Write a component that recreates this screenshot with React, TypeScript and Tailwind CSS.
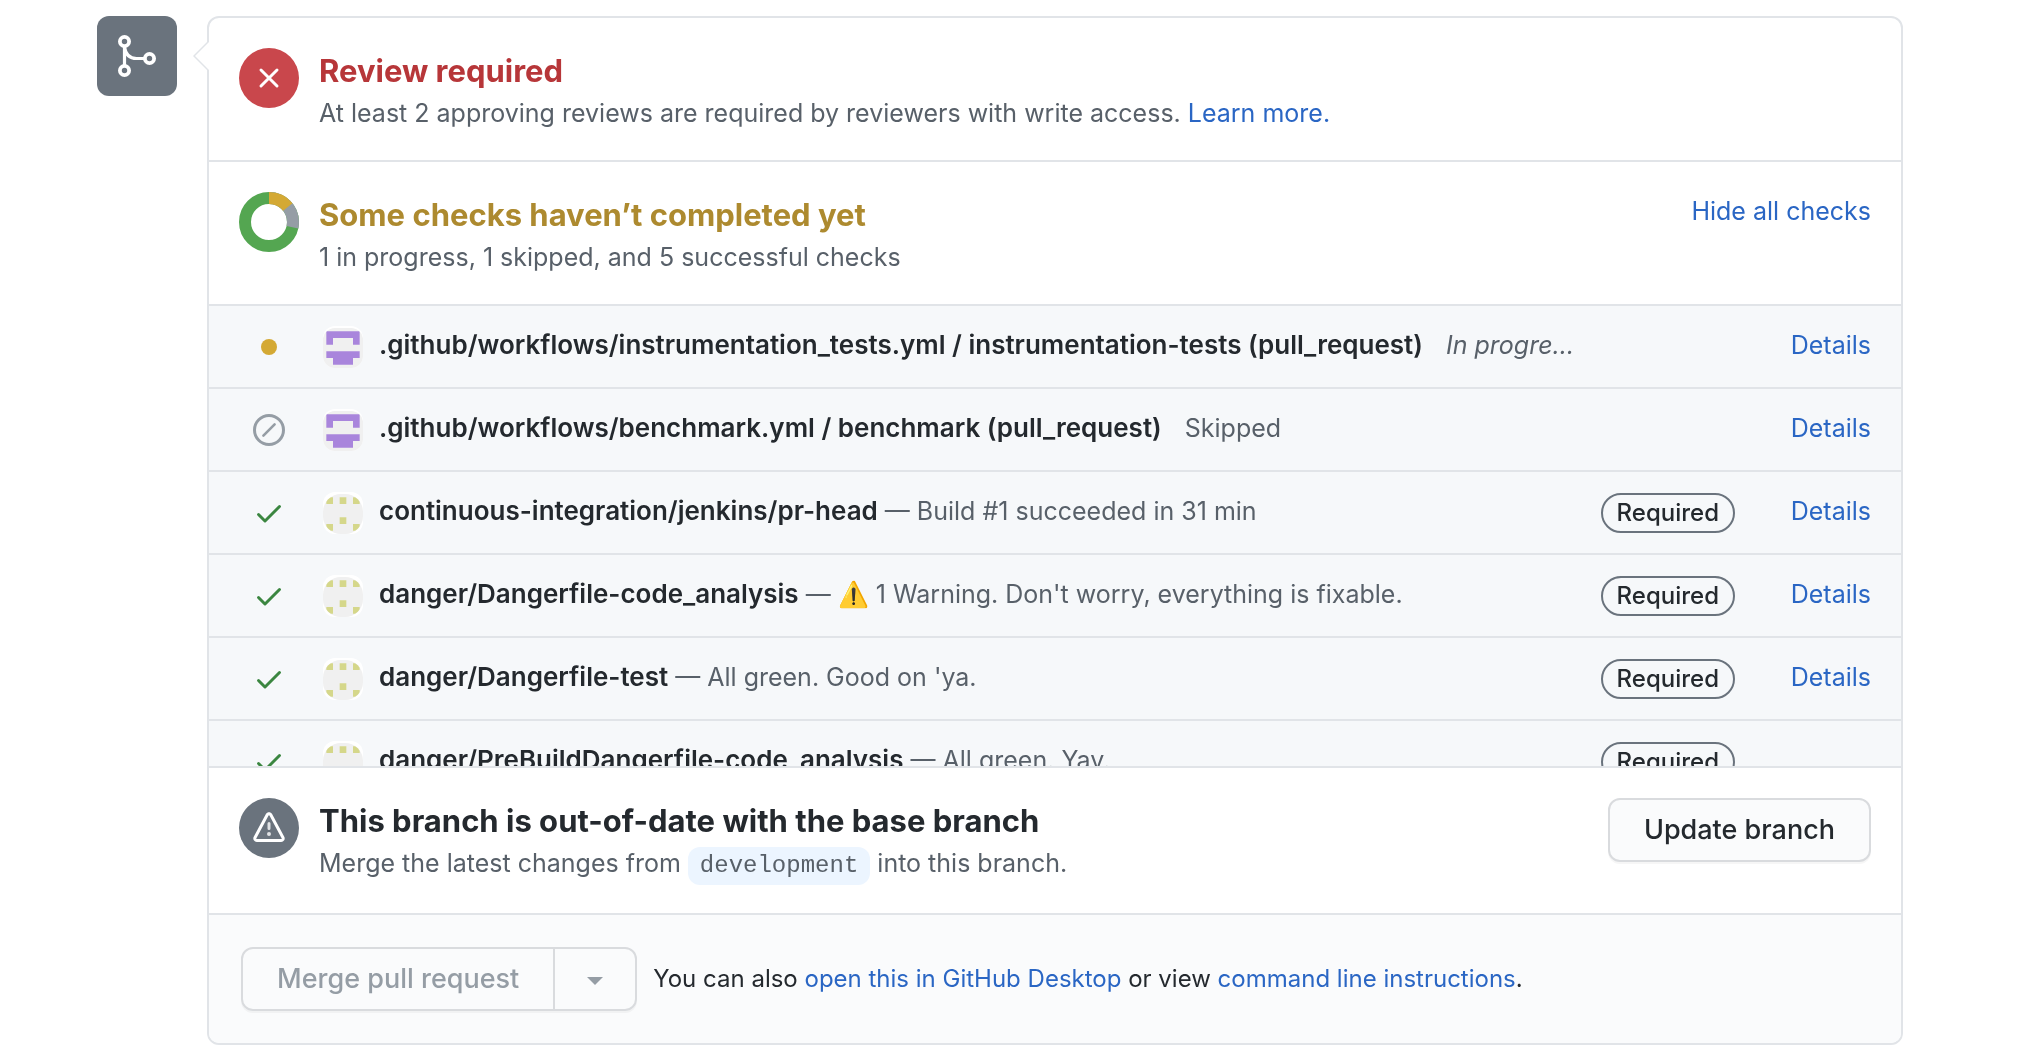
import type { ReactNode } from "react";

type Status = "pending" | "skipped" | "success";
type Check = {
  status: Status;
  name: string;
  note: string;
  required?: boolean;
  details?: boolean;
};

const checks: Check[] = [
  { status: "pending", name: ".github/workflows/instrumentation_tests.yml / instrumentation-tests (pull_request)", note: "In progre…", details: true },
  { status: "skipped", name: ".github/workflows/benchmark.yml / benchmark (pull_request)", note: "Skipped", details: true },
  { status: "success", name: "continuous-integration/jenkins/pr-head", note: "— Build #1 succeeded in 31 min", required: true, details: true },
  { status: "success", name: "danger/Dangerfile-code_analysis", note: "— ⚠️ 1 Warning. Don't worry, everything is fixable.", required: true, details: true },
  { status: "success", name: "danger/Dangerfile-test", note: "— All green. Good on 'ya.", required: true, details: true },
  { status: "success", name: "danger/PreBuildDangerfile-code_analysis", note: "— All green. Yay.", required: true },
];

function MergeIcon() {
  return (
    <svg viewBox="0 0 48 48" className="size-12" fill="none" stroke="#fff" strokeWidth="3.8" aria-hidden="true">
      <circle cx="11.5" cy="9.5" r="4.6" />
      <circle cx="11.5" cy="38.5" r="4.6" />
      <circle cx="36.5" cy="26.5" r="4.6" />
      <path strokeWidth="3.2" d="M11.5 14v20M11.5 15c1 7 5 11.5 12 11.5h8.5" />
    </svg>
  );
}

function CheckStatus({ status }: { status: Status }) {
  if (status === "pending") {
    return (
      <svg viewBox="0 0 16 16" className="size-8" role="img" aria-label="In progress">
        <circle cx="8" cy="8" r="4" fill="#d4a934" />
      </svg>
    );
  }
  if (status === "skipped") {
    return (
      <svg viewBox="0 0 16 16" className="size-8" fill="none" stroke="#959da5" strokeWidth="1.5" role="img" aria-label="Skipped">
        <circle cx="8" cy="8" r="7.25" />
        <path d="M5.2 10.8l5.6-5.6" strokeWidth="1.3" strokeLinecap="round" />
      </svg>
    );
  }
  return (
    <svg viewBox="0 0 16 16" className="size-8" fill="#3b8640" role="img" aria-label="Successful">
      <path d="M13.78 4.22a.75.75 0 010 1.06l-7.25 7.25a.75.75 0 01-1.06 0L2.22 9.28a.75.75 0 011.06-1.06L6 10.94l6.72-6.72a.75.75 0 011.06 0z" />
    </svg>
  );
}

function Avatar({ workflow }: { workflow: boolean }) {
  return (
    <span className="mt-0.5 mr-4 ml-6 block size-10 shrink-0 rounded-xl bg-white shadow-[0_-2px_0_#fff]">
      {workflow ? (
        <svg viewBox="0 0 12 12" className="size-10 rounded-xl bg-[#f0f0f0]" aria-hidden="true">
          <path fill="#a985dc" d="M1 1h10v4H9V3H3v2H1zM1 7h10v2H9v2H3V9H1z" />
        </svg>
      ) : (
        <svg viewBox="0 0 12 12" className="size-10 rounded-[18px] bg-[#f0f0f0]" aria-hidden="true">
          <path fill="#d5d78a" d="M1 1h2v2H1zM5 1h2v2H5zM9 1h2v2H9zM5 7h2v2H5zM1 9h2v2H1zM9 9h2v2H9z" />
        </svg>
      )}
    </span>
  );
}

function Donut() {
  return (
    <svg viewBox="0 0 60 60" className="size-[60px]" fill="none" strokeWidth="12" role="img" aria-label="5 of 7 checks successful">
      <g transform="rotate(-90 30 30)">
        <circle cx="30" cy="30" r="24" stroke="#54a651" />
        <circle cx="30" cy="30" r="24" stroke="#959da5" pathLength="7" strokeDasharray="2 5" />
        <circle cx="30" cy="30" r="24" stroke="#d4a934" pathLength="7" strokeDasharray="1 6" />
      </g>
    </svg>
  );
}

function Section({ icon, title, titleColor, action, children }: { icon: ReactNode; title: string; titleColor: string; action?: ReactNode; children: ReactNode }) {
  return (
    <section className="flex items-start gap-5 border-b-2 border-[#e1e4e8] px-[30px] pt-[30px] pb-7">
      <div className="size-[60px] shrink-0">{icon}</div>
      <div className="min-w-0 flex-1">
        <h3 className={`text-[31px] leading-[46px] font-bold ${titleColor}`}>{title}</h3>
        <p className="text-[25px] leading-[38px] text-[#586069]">{children}</p>
      </div>
      {action}
    </section>
  );
}

function CheckRow({ check }: { check: Check }) {
  const spaced = check.status !== "success";
  const italic = check.status === "pending";
  return (
    <li className="flex h-[83px] items-center border-b-2 border-[#e1e4e8] px-[30px]">
      <span className="flex w-[60px] shrink-0 justify-center">
        <CheckStatus status={check.status} />
      </span>
      <Avatar workflow={spaced} />
      <p className="min-w-0 flex-1 truncate pb-1 text-[25px] leading-[38px] text-[#586069]">
        <strong className="text-[26px] font-semibold text-[#24292e]">{check.name}</strong>{" "}
        <span className={`${spaced ? "ml-4" : ""} ${italic ? "italic" : ""}`}>{check.note}</span>
      </p>
      {check.required && (
        <span className="h-10 rounded-full border-2 border-[#6a737d] px-3.5 text-2xl leading-9 font-medium text-[#24292e]">
          Required
        </span>
      )}
      <span className="w-[136px] shrink-0 pb-1 text-right text-[25px] leading-[38px]">
        {check.details && <a href="#details" className="text-[#2a66c4]">Details</a>}
      </span>
    </li>
  );
}

export default function App() {
  return (
    <main className="flex min-h-screen items-start gap-[30px] bg-white pt-4 pr-[138px] pl-[97px] font-['Inter',sans-serif] text-[#24292e]">
      <div className="flex size-20 shrink-0 items-center justify-center rounded-xl bg-[#6a737d]">
        <MergeIcon />
      </div>
      <div className="relative min-w-0 flex-1 rounded-xl border-2 border-[#e1e4e8]">
        <svg viewBox="0 0 16 32" className="absolute top-[22px] -left-4 h-8 w-4" aria-hidden="true">
          <path d="M16 1L1 16l15 15" fill="#fff" stroke="#e1e4e8" strokeWidth="1.5" />
        </svg>
        <Section
          title="Review required"
          titleColor="text-[#b73639]"
          icon={
            <div className="flex size-[60px] items-center justify-center rounded-full bg-[#c9474c]">
              <svg viewBox="0 0 16 16" className="size-8" fill="none" stroke="#fff" strokeWidth="1.5" strokeLinecap="round" aria-hidden="true">
                <path d="M4 4l8 8M12 4l-8 8" />
              </svg>
            </div>
          }
        >
          At least 2 approving reviews are required by reviewers with write access.{" "}
          <a href="#learn" className="text-[#2a66c4]">Learn more.</a>
        </Section>
        <Section
          title="Some checks haven’t completed yet"
          titleColor="text-[#ad8a2f]"
          icon={<Donut />}
          action={<button type="button" className="text-[25px] leading-[38px] text-[#2a66c4]">Hide all checks</button>}
        >
          1 in progress, 1 skipped, and 5 successful checks
        </Section>
        <ul className="h-[460px] overflow-y-auto bg-[#f6f8fa] [scrollbar-width:none]">
          {checks.map((check) => (
            <CheckRow key={check.name} check={check} />
          ))}
        </ul>
        <div className="border-t-2 border-[#e1e4e8]">
          <Section
            title="This branch is out-of-date with the base branch"
            titleColor="text-[#24292e]"
            icon={
              <div className="flex size-[60px] items-center justify-center rounded-full bg-[#6a737d]">
                <svg viewBox="0 0 16 16" className="size-8" fill="#fff" aria-hidden="true">
                  <path d="M8.22 1.754a.25.25 0 00-.44 0L1.698 13.132a.25.25 0 00.22.368h12.164a.25.25 0 00.22-.368L8.22 1.754zm-1.763-.707c.659-1.234 2.427-1.234 3.086 0l6.082 11.378A1.75 1.75 0 0114.082 15H1.918a1.75 1.75 0 01-1.543-2.575L6.457 1.047z" />
                  <path opacity="0.8" d="M9 11a1 1 0 11-2 0 1 1 0 012 0zm-.25-5.25a.75.75 0 00-1.5 0v2.5a.75.75 0 001.5 0v-2.5z" />
                </svg>
              </div>
            }
            action={
              <button type="button" className="h-16 rounded-xl border-2 border-[#d9dbde] bg-[#fafbfc] px-[34px] text-[27px] font-medium shadow-[0_2px_0_rgba(27,31,35,0.04)]">
                Update branch
              </button>
            }
          >
            Merge the latest changes from{" "}
            <code className="inline-block rounded-xl bg-[#ecf5ff] px-3 font-['Liberation_Mono',monospace] text-2xl leading-[38px]">development</code>{" "}
            into this branch.
          </Section>
        </div>
        <footer className="flex items-center gap-4 rounded-b-[10px] bg-[#fafbfc] p-8">
          <div className="flex h-16 rounded-xl border-2 border-[#d9dbde] text-[#959da5] shadow-[0_2px_0_rgba(27,31,35,0.04)]">
            <button type="button" disabled className="px-[34px] text-[27px] font-medium">Merge pull request</button>
            <button type="button" disabled aria-label="Select merge method" className="flex w-[82px] items-center justify-center border-l-2 border-[#d9dbde]">
              <svg viewBox="0 0 16 8" className="mt-1 h-2 w-4" fill="currentColor" aria-hidden="true">
                <path d="M0 0h16L8 8z" />
              </svg>
            </button>
          </div>
          <p className="text-2xl leading-9">
            You can also <a href="#desktop" className="text-[#2a66c4]">open this in GitHub Desktop</a> or view{" "}
            <a href="#cli" className="text-[#2a66c4]">command line instructions</a>.
          </p>
        </footer>
      </div>
    </main>
  );
}
